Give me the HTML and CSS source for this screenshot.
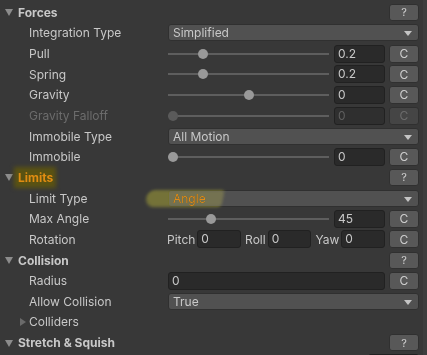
FILE: index.html
```html
<!DOCTYPE html>
<html lang="en">
<head>
    <meta charset="UTF-8">
    <title>Inspector - Bone Settings</title>
    <link rel="stylesheet" href="styles.css">
</head>
<body>
    <div class="inspector">
        <div class="row header">
            <span class="fold open"></span><span class="title">Forces</span>
            <span class="btn help">?</span>
        </div>
        <div class="row">
            <span class="label">Integration Type</span>
            <div class="popup">Simplified</div>
        </div>
        <div class="row">
            <span class="label">Pull</span>
            <div class="slider"><div class="rail"><span class="knob" style="left: 20%"></span></div></div>
            <div class="field num">0.2</div>
            <span class="btn">C</span>
        </div>
        <div class="row">
            <span class="label">Spring</span>
            <div class="slider"><div class="rail"><span class="knob" style="left: 20%"></span></div></div>
            <div class="field num">0.2</div>
            <span class="btn">C</span>
        </div>
        <div class="row">
            <span class="label">Gravity</span>
            <div class="slider"><div class="rail"><span class="knob" style="left: 50%"></span></div></div>
            <div class="field num">0</div>
            <span class="btn">C</span>
        </div>
        <div class="row disabled">
            <span class="label">Gravity Falloff</span>
            <div class="slider"><div class="rail"><span class="knob" style="left: 0%"></span></div></div>
            <div class="field num">0</div>
            <span class="btn">C</span>
        </div>
        <div class="row">
            <span class="label">Immobile Type</span>
            <div class="popup">All Motion</div>
        </div>
        <div class="row">
            <span class="label">Immobile</span>
            <div class="slider"><div class="rail"><span class="knob" style="left: 0%"></span></div></div>
            <div class="field num">0</div>
            <span class="btn">C</span>
        </div>

        <div class="row header">
            <span class="fold open"></span><span class="title marked">Limits</span>
            <span class="btn help">?</span>
        </div>
        <div class="row">
            <span class="label">Limit Type</span>
            <div class="popup orange">Angle</div>
            <span class="marker"></span>
        </div>
        <div class="row">
            <span class="label">Max Angle</span>
            <div class="slider"><div class="rail"><span class="knob" style="left: 25%"></span></div></div>
            <div class="field num">45</div>
            <span class="btn">C</span>
        </div>
        <div class="row">
            <span class="label">Rotation</span>
            <div class="axes">
                <span class="axis">Pitch</span><div class="field">0</div>
                <span class="axis">Roll</span><div class="field">0</div>
                <span class="axis">Yaw</span><div class="field">0</div>
            </div>
            <span class="btn">C</span>
        </div>

        <div class="row header">
            <span class="fold open"></span><span class="title">Collision</span>
            <span class="btn help">?</span>
        </div>
        <div class="row">
            <span class="label">Radius</span>
            <div class="field wide">0</div>
            <span class="btn">C</span>
        </div>
        <div class="row">
            <span class="label">Allow Collision</span>
            <div class="popup">True</div>
        </div>
        <div class="row sub">
            <span class="fold closed"></span><span class="label">Colliders</span>
        </div>

        <div class="row header">
            <span class="fold open"></span><span class="title">Stretch &amp; Squish</span>
            <span class="btn help">?</span>
        </div>
        <div class="row">
            <span class="label"></span>
            <div class="slider"></div>
            <div class="field num dark"></div>
        </div>
    </div>
</body>
</html>
```

FILE: styles.css
```css
html, body { margin: 0; background: #383838; overflow: hidden; }
body { font-family: Inter, "Noto Sans", sans-serif; font-size: 12px; color: #c8c8c8; }
.inspector { padding: 2px 4px 0 0; position: relative; border-right: 4px solid #3e3e3e; width: 419px; }

.row { display: flex; align-items: center; height: 20.65px; position: relative; }
.label { width: 139px; padding-left: 29px; flex: none; white-space: nowrap; }

.header .title { font-weight: 700; padding-left: 4px; margin-right: auto; position: relative; isolation: isolate; }
.fold { width: 14px; height: 10px; flex: none; position: relative; }
.fold.open::before { content: ""; position: absolute; left: 5px; top: 2px; border-left: 4px solid transparent; border-right: 4px solid transparent; border-top: 7px solid #8c8c8c; }
.fold.closed::before { content: ""; position: absolute; left: 20px; top: 1px; border-top: 4px solid transparent; border-bottom: 4px solid transparent; border-left: 6px solid #6a6a6a; }
.sub .label { padding-left: 15px; width: 153px; }

.btn { width: 28px; height: 16px; flex: none; background: #585858; border: 1px solid #303030; border-radius: 3px; display: flex; align-items: center; justify-content: center; color: #cfcfcf; font-size: 12px; margin-left: 4px; }
.help { height: 15px; font-size: 11px; }

.popup { flex: 1; height: 15px; background: #515151; border: 1px solid #303030; border-radius: 3px; padding-left: 4px; position: relative; line-height: 15px; }
.popup::after { content: ""; position: absolute; right: 6px; top: 6px; border-left: 4px solid transparent; border-right: 4px solid transparent; border-top: 5px solid #c4c4c4; }
.popup.orange { color: #e08c12; }

.slider { flex: 1; height: 18px; position: relative; margin-right: 5px; }
.slider::before { content: ""; position: absolute; left: 0; right: 0; top: 8px; height: 2px; background: #5e5e5e; }
.rail { position: absolute; left: 0; right: 10px; top: 0; bottom: 0; }
.knob { position: absolute; top: 4px; width: 10px; height: 10px; border-radius: 50%; background: #999999; }

.field { height: 16px; background: #2a2a2a; border: 1px solid #212121; border-radius: 3px; padding-left: 3px; line-height: 16px; }
.num { width: 46px; flex: none; }
.wide { flex: 1; }
.dark { background: #111111; }

.axes { flex: 1; display: flex; align-items: center; margin-left: -1px; }
.axes .axis { padding-right: 2px; white-space: nowrap; }
.axes .field { flex: 1; margin-right: 4px; }
.axes .field:last-child { margin-right: 0; }

.disabled { color: #6c6c6c; }
.disabled .knob { background: #5a5a5a; }
.disabled .field { color: #5f5f5f; background: #2f2f2f; }
.disabled .btn { color: #6c6c6c; background: #454545; }

.header .marked { color: #e08c12; }
.marked::before { content: ""; position: absolute; left: 0; right: -3px; top: -3px; bottom: -3px; background: #5a5212; filter: blur(2px); z-index: -1; }
.marker { position: absolute; left: 146px; top: 2px; width: 77px; height: 17px; background: #74721a; mix-blend-mode: lighten; border-radius: 8px 4px 4px 10px; filter: blur(1.5px); transform: skewX(-12deg); }
```
